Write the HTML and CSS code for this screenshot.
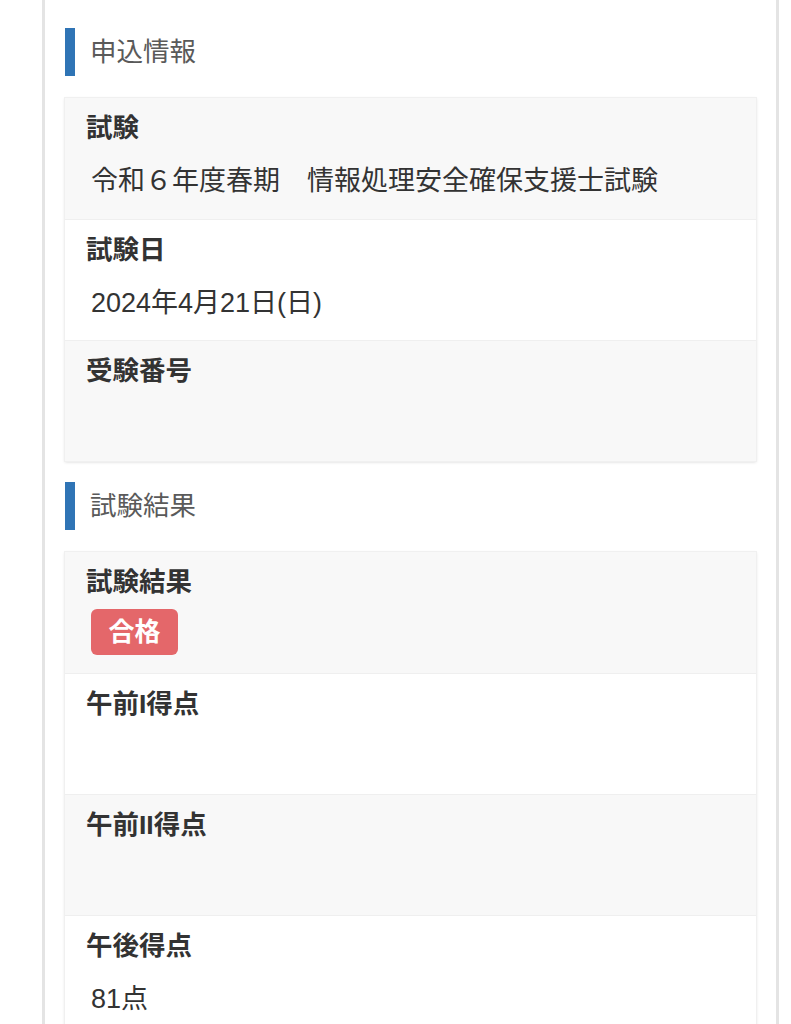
FILE: index.html
```html
<!DOCTYPE html>
<html lang="ja">

<head>
    <meta charset="utf-8">
    <title>試験結果</title>
    <meta name="viewport" content="width=device-width, initial-scale=1">
    <link rel="stylesheet" href="styles.css">
</head>

<body>
    <div class="page">
        <h2 class="section-title">申込情報</h2>
        <div class="card">
            <div class="row">
                <div class="label">試験</div>
                <div class="value">令和６年度春期　情報処理安全確保支援士試験</div>
            </div>
            <div class="row">
                <div class="label">試験日</div>
                <div class="value">2024年4月21日(日)</div>
            </div>
            <div class="row">
                <div class="label">受験番号</div>
                <div class="value"></div>
            </div>
        </div>

        <h2 class="section-title">試験結果</h2>
        <div class="card">
            <div class="row">
                <div class="label">試験結果</div>
                <div class="value"><span class="badge">合格</span></div>
            </div>
            <div class="row">
                <div class="label">午前I得点</div>
                <div class="value"></div>
            </div>
            <div class="row">
                <div class="label">午前II得点</div>
                <div class="value"></div>
            </div>
            <div class="row">
                <div class="label">午後得点</div>
                <div class="value">81点</div>
            </div>
        </div>
    </div>
</body>

</html>
```

FILE: styles.css
```css
html {
    font-family: "Liberation Sans", "Noto Sans CJK JP", sans-serif;
    color: #333;
}

body {
    margin: 0;
    background-color: #fff;
}

.page {
    margin-left: 42px;
    width: 691px;
    min-height: 1100px;
    border-left: 3px solid #e4e4e4;
    border-right: 3px solid #e4e4e4;
    padding: 28px 20px 0 20px;
}

.section-title {
    margin: 0;
    height: 48px;
    line-height: 48px;
    border-left: 10px solid #2f74b5;
    padding-left: 15px;
    font-size: 26.5px;
    font-weight: normal;
    color: #5a5a5a;
}

.card {
    margin: 22px 0 21px 0;
    box-shadow: 0 0 0 1px #f0f0f0, 0 1px 3px rgba(0, 0, 0, .18);
}

.row {
    height: 121px;
    box-sizing: border-box;
    padding: 12px 21px 0 21px;
    border-top: 1px solid #efefef;
    background-color: #fff;
}

.row:first-child {
    border-top: none;
}

.row:nth-child(odd) {
    background-color: #f8f8f8;
}

.label {
    font-size: 26.5px;
    line-height: 36px;
    font-weight: bold;
    color: #333;
}

.value {
    margin-top: 14px;
    height: 36px;
    padding-left: 5px;
    display: flex;
    align-items: center;
    font-size: 27px;
    color: #333;
}

.badge {
    display: inline-block;
    width: 87px;
    height: 46px;
    line-height: 46px;
    text-align: center;
    border-radius: 6px;
    background-color: #e4676a;
    color: #fff;
    font-weight: bold;
    font-size: 26px;
}
```
